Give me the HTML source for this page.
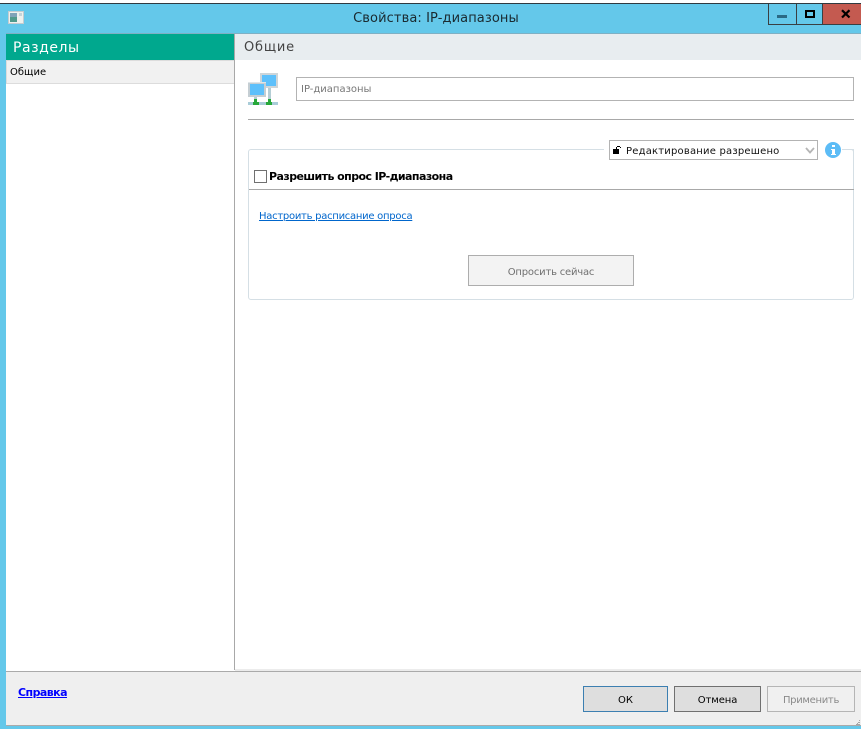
<!DOCTYPE html>
<html><head><meta charset="utf-8">
<style>
html,body{margin:0;padding:0;width:861px;height:729px;overflow:hidden;background:#fff}
body{position:relative;font-family:"DejaVu Sans","Liberation Sans",sans-serif;font-size:10px;color:#000}
.a{position:absolute;box-sizing:border-box}
.t{position:absolute;white-space:nowrap;line-height:14px}
</style></head><body>
<div class="a" style="left:0;top:0;width:861px;height:3px;background:#fff"></div>
<div class="a" style="left:0;top:3px;width:861px;height:1px;background:#2f3a40"></div>
<div class="a" style="left:0;top:4px;width:861px;height:725px;background:#64c8ea"></div>
<!-- title icon -->
<svg class="a" style="left:8px;top:11px" width="16" height="14" viewBox="0 0 16 14">
<rect x="0.5" y="0.5" width="15" height="12" fill="#eef1ee" stroke="#c4ccd0"/>
<rect x="2" y="2" width="7" height="9" fill="#4f9a8c"/><rect x="2" y="2" width="7" height="4" fill="#7fa3b8"/>
<rect x="11" y="2" width="3" height="3" fill="#c5d3d8"/>
</svg>
<div class="t" style="left:0;top:11px;width:872px;text-align:center;font-size:13px;line-height:16px;color:#1a2a30;font-family:'DejaVu Sans',sans-serif;letter-spacing:.1px">Свойства: IP-диапазоны</div>
<!-- window buttons -->
<div class="a" style="left:768px;top:4px;width:55px;height:21px;border:1px solid #3a3f42;border-top:0"></div>
<div class="a" style="left:796px;top:4px;width:1px;height:20px;background:#3a3f42"></div>
<div class="a" style="left:822px;top:4px;width:39px;height:21px;background:#c45a50;border-left:1px solid #3a3f42;border-bottom:1px solid #3a3f42"></div>
<div class="a" style="left:777px;top:15px;width:10px;height:3px;background:#2a6a85"></div>
<div class="a" style="left:805px;top:10px;width:10px;height:8px;border:2px solid #000"></div>
<svg class="a" style="left:841px;top:9px" width="10" height="10" viewBox="0 0 10 10"><path d="M1 1.2L8.5 8.5M8.5 1.2L1 8.5" stroke="#000" stroke-width="2.2" fill="none"/></svg>
<!-- window client -->
<div class="a" style="left:6px;top:33px;width:855px;height:692px;background:#fff"></div>
<div class="a" style="left:6px;top:33px;width:855px;height:1px;background:#7fb0c4"></div>
<div class="a" style="left:6px;top:34px;width:228px;height:26px;background:#00a88e"></div>
<div class="t" style="left:13px;top:39px;font-size:14px;line-height:18px;color:#fff;letter-spacing:.55px">Разделы</div>
<div class="a" style="left:6px;top:60px;width:228px;height:24px;background:#f1f1f1;border:1px solid #dcdcdc;border-width:1px 0 1px 1px"></div>
<div class="t" style="left:10px;top:66px;font-size:10px;color:#000">Общие</div>
<div class="a" style="left:234px;top:34px;width:1px;height:636px;background:#a8a8a8"></div>
<div class="a" style="left:235px;top:34px;width:626px;height:26px;background:#e8edf0"></div>
<div class="t" style="left:244px;top:39px;font-size:13px;line-height:18px;color:#444;letter-spacing:.8px">Общие</div>
<!-- network icon -->
<svg class="a" style="left:248px;top:73px" width="30" height="33" viewBox="0 0 30 33" shape-rendering="crispEdges">
<rect x="0" y="29" width="30" height="3" fill="#a9ccd8"/>
<rect x="20" y="15" width="3" height="14" fill="#b4cdd5"/>
<rect x="12" y="0" width="18" height="15" fill="#cdd5d9"/>
<rect x="14" y="2" width="14" height="11" fill="#5dc0fb"/>
<rect x="0" y="9" width="18" height="15" fill="#c5ced3"/><rect x="0" y="9" width="18" height="1" fill="#dfe5e8"/>
<rect x="2" y="11" width="14" height="11" fill="#5dc0fb"/>
<rect x="6" y="24" width="3" height="5" fill="#b4cdd5"/>
<rect x="6" y="26" width="3" height="3" fill="#27a83a"/><rect x="5" y="29" width="6" height="3" fill="#27a83a"/>
<rect x="20" y="26" width="3" height="3" fill="#27a83a"/><rect x="18" y="29" width="6" height="3" fill="#27a83a"/>
</svg>
<!-- name input -->
<div class="a" style="left:296px;top:77px;width:558px;height:24px;border:1px solid #b3b3b3;background:#fff"></div>
<div class="t" style="left:301px;top:82px;font-size:10px;color:#777;transform:translateY(1px)">IP-диапазоны</div>
<div class="a" style="left:248px;top:119px;width:606px;height:1px;background:#a8a8a8"></div>
<!-- group -->
<div class="a" style="left:248px;top:149px;width:606px;height:151px;border:1px solid #d5dfe5;border-radius:3px"></div>
<div class="a" style="left:249px;top:189px;width:605px;height:1px;background:#a8a8a8"></div>
<div class="a" style="left:604px;top:140px;width:246px;height:20px;background:#fff"></div>
<div class="a" style="left:842px;top:149px;width:12px;height:1px;background:#d5dfe5"></div>
<div class="a" style="left:853px;top:150px;width:1px;height:12px;background:#d5dfe5"></div>
<!-- combo -->
<div class="a" style="left:609px;top:140px;width:209px;height:20px;border:1px solid #b3b3b3;background:#fff"></div>
<svg class="a" style="left:613px;top:145px" width="11" height="10" viewBox="0 0 11 10" shape-rendering="crispEdges">
<rect x="0" y="4" width="6" height="5" fill="#000"/><path d="M3 4V2H4V1H7V2H8V3H7V2H4V4Z" fill="#000"/>
</svg>
<div class="t" style="left:626px;top:145px;font-size:10px;color:#111;letter-spacing:.2px">Редактирование разрешено</div>
<svg class="a" style="left:805px;top:147px" width="10" height="7" viewBox="0 0 10 7"><path d="M1 1L5 5.5L9 1" stroke="#b5b5b5" stroke-width="1.8" fill="none"/></svg>
<svg class="a" style="left:825px;top:142px" width="16" height="16" viewBox="0 0 16 16"><circle cx="8" cy="8" r="8" fill="#5cbcf6"/><rect x="7" y="3" width="3" height="2" fill="#fff"/><path d="M6 7H10V12H11V13H6V12H7V8H6Z" fill="#fff"/></svg>
<!-- checkbox -->
<div class="a" style="left:254px;top:170px;width:13px;height:13px;border:1px solid #707070;background:#fff"></div>
<div class="t" style="left:269px;top:170px;font-size:11px;font-weight:bold;color:#000;letter-spacing:-.56px">Разрешить опрос IP-диапазона</div>
<div class="t" style="left:259px;top:210px;font-size:10px;color:#0066cc;text-decoration:underline;letter-spacing:-.27px">Настроить расписание опроса</div>
<div class="a" style="left:468px;top:255px;width:166px;height:31px;background:#f3f3f3;border:1px solid #adadad"></div>
<div class="t" style="left:468px;top:266px;width:166px;text-align:center;font-size:10px;color:#707070;letter-spacing:-.2px">Опросить сейчас</div>
<!-- footer -->
<div class="a" style="left:6px;top:670px;width:855px;height:1px;background:#fff"></div>
<div class="a" style="left:235px;top:669px;width:626px;height:2px;background:#ececec"></div>
<div class="a" style="left:6px;top:671px;width:855px;height:55px;background:#efefef;border-top:1px solid #aaa;border-bottom:1px solid #aaa"></div>
<div class="t" style="left:18px;top:686px;font-size:11px;font-weight:bold;color:#0000ff;text-decoration:underline;letter-spacing:-.55px">Справка</div>
<div class="a" style="left:583px;top:686px;width:85px;height:26px;background:#dedede;border:1px solid #3c7fb1"></div>
<div class="t" style="left:583px;top:694px;width:85px;text-align:center;font-size:10px">ОК</div>
<div class="a" style="left:674px;top:686px;width:87px;height:26px;background:#dedede;border:1px solid #707070"></div>
<div class="t" style="left:674px;top:694px;width:87px;text-align:center;font-size:10px;letter-spacing:-.1px">Отмена</div>
<div class="a" style="left:767px;top:686px;width:88px;height:26px;background:#f0f0f0;border:1px solid #b5b5b5"></div>
<div class="t" style="left:767px;top:694px;width:88px;text-align:center;font-size:10px;color:#8a8a8a;letter-spacing:-.3px">Применить</div>
<svg class="a" style="left:855px;top:720px" width="6" height="6" viewBox="0 0 6 6"><path d="M5 0V1H4V2H5V3H3V4H5V5H1V4H2V3H3V2H4V0Z" fill="#a5a5a5"/></svg>
</body></html>
